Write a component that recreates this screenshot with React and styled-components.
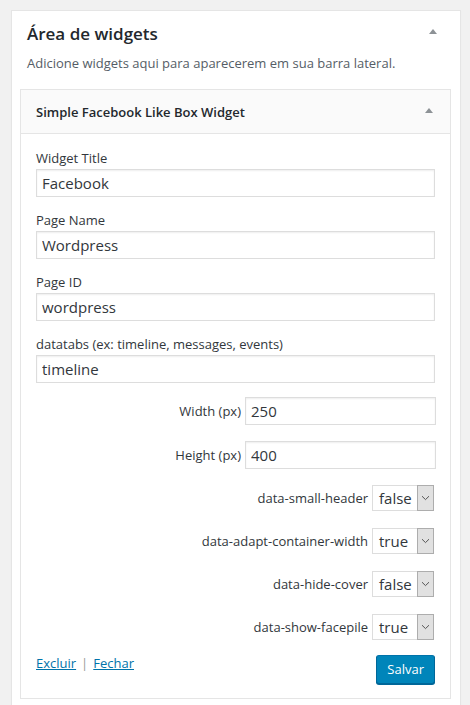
import React from 'react';
import styled, { createGlobalStyle } from 'styled-components';

const GlobalStyle = createGlobalStyle`
  body {
    margin: 0;
    background: #f1f1f1;
    font-family: "Open Sans", "Liberation Sans", sans-serif;
    font-size: 13px;
    color: #444;
    overflow: hidden;
  }
`;

const fields = [
  { label: 'Widget Title', value: 'Facebook' },
  { label: 'Page Name', value: 'Wordpress' },
  { label: 'Page ID', value: 'wordpress' },
  { label: 'datatabs (ex: timeline, messages, events)', value: 'timeline' },
];

const sizes = [
  { label: 'Width (px)', value: '250' },
  { label: 'Height (px)', value: '400' },
];

const options = [
  { label: 'data-small-header', value: 'false' },
  { label: 'data-adapt-container-width', value: 'true' },
  { label: 'data-hide-cover', value: 'false' },
  { label: 'data-show-facepile', value: 'true' },
];

const App = () => (
  <>
    <GlobalStyle />
    <Sidebar>
      <SidebarHeader>
        <SidebarTitle>Área de widgets</SidebarTitle>
        <Toggle />
      </SidebarHeader>
      <Description>Adicione widgets aqui para aparecerem em sua barra lateral.</Description>

      <Widget>
        <WidgetTop>
          <WidgetTitle>Simple Facebook Like Box Widget</WidgetTitle>
          <Toggle small />
        </WidgetTop>

        <WidgetBody>
          {fields.map(f => (
            <Field key={f.label}>
              <Label>{f.label}</Label>
              <TextInput readOnly value={f.value} />
            </Field>
          ))}

          {sizes.map(s => (
            <InlineRow key={s.label} spacing={16}>
              <InlineLabel>{s.label}</InlineLabel>
              <SmallInput readOnly value={s.value} />
            </InlineRow>
          ))}

          {options.map(o => (
            <InlineRow key={o.label} spacing={17}>
              <InlineLabel>{o.label}</InlineLabel>
              <SelectBox>
                <SelectValue>{o.value}</SelectValue>
                <SelectArrow>
                  <svg width="9" height="6" viewBox="0 0 9 6">
                    <path d="M1 1.2 L4.5 4.6 L8 1.2" fill="none" stroke="#555" strokeWidth="1" />
                  </svg>
                </SelectArrow>
              </SelectBox>
            </InlineRow>
          ))}

          <Actions>
            <Links>
              <ActionLink href="#">Excluir</ActionLink>
              <Separator>|</Separator>
              <ActionLink href="#">Fechar</ActionLink>
            </Links>
            <SaveButton type="button">Salvar</SaveButton>
          </Actions>
        </WidgetBody>
      </Widget>
    </Sidebar>
  </>
);

const Sidebar = styled.div`
  margin: 10px 0 0 11px;
  width: 450px;
  border: 1px solid #e5e5e5;
  background: #fff;
  padding: 0 9px 30px 8px;
  box-sizing: border-box;
  box-shadow: 0 1px 1px rgba(0, 0, 0, 0.04);
`;

const SidebarHeader = styled.div`
  display: flex;
  align-items: center;
  justify-content: space-between;
  padding: 11px 7px 0;
`;

const SidebarTitle = styled.h2`
  margin: 0;
  font-size: 17px;
  line-height: 24px;
  font-weight: 600;
  color: #23282d;
`;

const Toggle = styled.span`
  width: 0;
  height: 0;
  border-left: 4px solid transparent;
  border-right: 4px solid transparent;
  border-bottom: 5px solid #8d9296;
  margin-right: ${props => (props.small ? '1px' : '7px')};
  margin-top: ${props => (props.small ? '-2px' : '-6px')};
`;

const Description = styled.p`
  margin: 8px 0 0;
  padding: 0 7px;
  font-size: 13px;
  line-height: 18px;
  color: #555d66;
`;

const Widget = styled.div`
  margin-top: 17px;
  border: 1px solid #e5e5e5;
  background: #fff;
`;

const WidgetTop = styled.div`
  display: flex;
  align-items: center;
  justify-content: space-between;
  height: 43px;
  padding: 0 16px 0 15px;
  background: #fafafa;
  border-bottom: 1px solid #e5e5e5;
`;

const WidgetTitle = styled.h3`
  margin: 0;
  font-size: 13px;
  font-weight: 600;
  color: #23282d;
`;

const WidgetBody = styled.div`
  padding: 15px 15px 14px;
`;

const Field = styled.div`
  display: flex;
  flex-direction: column;
  gap: 2px;
  margin-bottom: 14px;
`;

const Label = styled.label`
  font-size: 13px;
  line-height: 18px;
  color: #32373c;
`;

const inputStyles = `
  box-sizing: border-box;
  height: 28px;
  border: 1px solid #ddd;
  box-shadow: inset 0 1px 2px rgba(0, 0, 0, 0.07);
  background: #fff;
  font-family: "Open Sans", "Liberation Sans", sans-serif;
  font-size: 15px;
  color: #32373c;
  padding: 0 5px;
  outline: none;
  margin: 0;
`;

const TextInput = styled.input`
  ${inputStyles}
  width: 100%;
`;

const InlineRow = styled.div`
  display: flex;
  align-items: center;
  justify-content: flex-end;
  gap: 4px;
  margin-bottom: ${props => props.spacing}px;
`;

const InlineLabel = styled.span`
  font-size: 13px;
  color: #32373c;
`;

const SmallInput = styled.input`
  ${inputStyles}
  width: 191px;
  height: 28px;
  margin-right: -1px;
`;

const SelectBox = styled.div`
  display: flex;
  box-sizing: border-box;
  width: 62px;
  height: 26px;
  border: 1px solid #ddd;
  background: #fff;
  margin-right: 1px;
`;

const SelectValue = styled.span`
  flex: 1;
  padding-left: 6px;
  font-size: 15px;
  line-height: 24px;
  color: #32373c;
`;

const SelectArrow = styled.span`
  display: flex;
  align-items: center;
  justify-content: center;
  width: 17px;
  box-sizing: border-box;
  background: #e1e1e1;
  border: 1px solid #adadad;
  margin: -1px -1px -1px 0;
`;

const Actions = styled.div`
  display: flex;
  justify-content: space-between;
  align-items: flex-start;
  margin-top: -3px;
`;

const Links = styled.div`
  display: flex;
  gap: 5px;
  font-size: 13px;
  line-height: 18px;
`;

const ActionLink = styled.a`
  color: #0073aa;
  text-decoration: underline;
`;

const Separator = styled.span`
  color: #999;
`;

const SaveButton = styled.button`
  margin-top: 1px;
  height: 29px;
  padding: 0 10px 2px;
  border: 1px solid #0073aa;
  border-color: #0073aa #006799 #006799;
  border-radius: 3px;
  background: #0085ba;
  box-shadow: 0 1px 0 #006799;
  color: #fff;
  font-family: "Open Sans", "Liberation Sans", sans-serif;
  font-size: 13px;
  cursor: pointer;
`;

export default App;
